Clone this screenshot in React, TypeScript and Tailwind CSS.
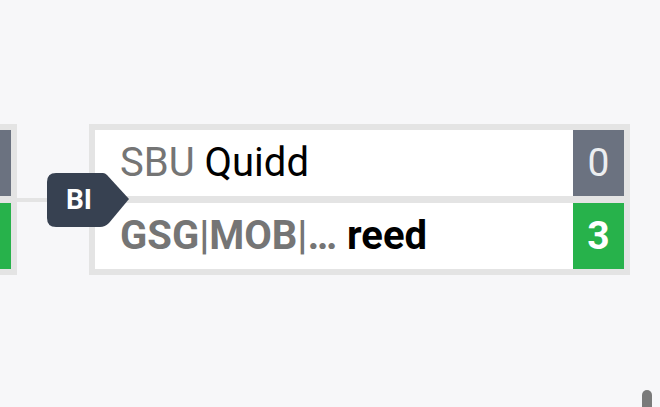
import type { ReactNode } from 'react';

/* ── Types ── */
interface Side {
  tag: string;
  name: string;
  score: number;
  winner: boolean;
}

interface MatchCardProps {
  top: Side;
  bottom: Side;
}

const FONT = { fontFamily: 'Roboto, "Noto Sans", sans-serif' };

/* ── One team row inside a match card ── */
function TeamRow({ side }: { side: Side }) {
  const weight = side.winner ? 'font-bold' : 'font-normal';
  return (
    <div className="flex h-[66px] bg-white">
      <div className={`flex-1 min-w-0 flex items-center pl-[25px] text-[40px] leading-none overflow-hidden whitespace-nowrap ${weight}`}>
        <span className="text-[#757575]">{side.tag}</span>
        <span className="text-black">&nbsp;{side.name}</span>
      </div>
      <div
        className={`w-[51px] flex items-center justify-center text-[39px] leading-none ${
          side.winner ? 'bg-[#27b24b] text-white font-bold' : 'bg-[#6b7280] text-[#eceef0] font-normal'
        }`}
      >
        {side.score}
      </div>
    </div>
  );
}

function MatchCard({ top, bottom }: MatchCardProps) {
  return (
    <div className="w-[541px] shrink-0 flex flex-col gap-[7px] bg-[#e4e4e4] p-[6px]">
      <TeamRow side={top} />
      <TeamRow side={bottom} />
    </div>
  );
}

/* ── Round label that sits on the connector ── */
function RoundBadge({ children }: { children: ReactNode }) {
  return (
    <div className="absolute left-[47px] top-[173px] w-[82px] h-[54px]">
      <svg width="82" height="54" viewBox="0 0 82 54" className="absolute inset-0">
        <path
          d="M9 0 H56 Q58 0 60 2 L82 26 L62 50 Q58 54 53 54 H9 Q0 54 0 45 V9 Q0 0 9 0 Z"
          fill="#374151"
        />
      </svg>
      <span className="absolute left-[19px] top-0 h-[54px] flex items-center text-[28px] font-bold text-white leading-none">
        {children}
      </span>
    </div>
  );
}

export default function App() {
  // previous round: only its score column shows at the left edge
  const prev: MatchCardProps = {
    top: { tag: '', name: '', score: 0, winner: false },
    bottom: { tag: '', name: '', score: 3, winner: true },
  };
  const current: MatchCardProps = {
    top: { tag: 'SBU', name: 'Quidd', score: 0, winner: false },
    bottom: { tag: 'GSG|MOB|…', name: 'reed', score: 3, winner: true },
  };

  return (
    <div className="relative w-[660px] h-[407px] overflow-hidden bg-[#f7f7f9]" style={FONT}>
      <div className="flex items-start pt-[124px] ml-[-524px]">
        <MatchCard {...prev} />
        <div className="w-[72px] h-[4px] self-center shrink-0 bg-[#e4e4e4]" />
        <MatchCard {...current} />
      </div>

      <RoundBadge>BI</RoundBadge>

      {/* scrollbar thumb */}
      <div className="absolute left-[642px] top-[390px] w-[10px] h-[30px] rounded-full bg-[#7a7a7a]" />
    </div>
  );
}
